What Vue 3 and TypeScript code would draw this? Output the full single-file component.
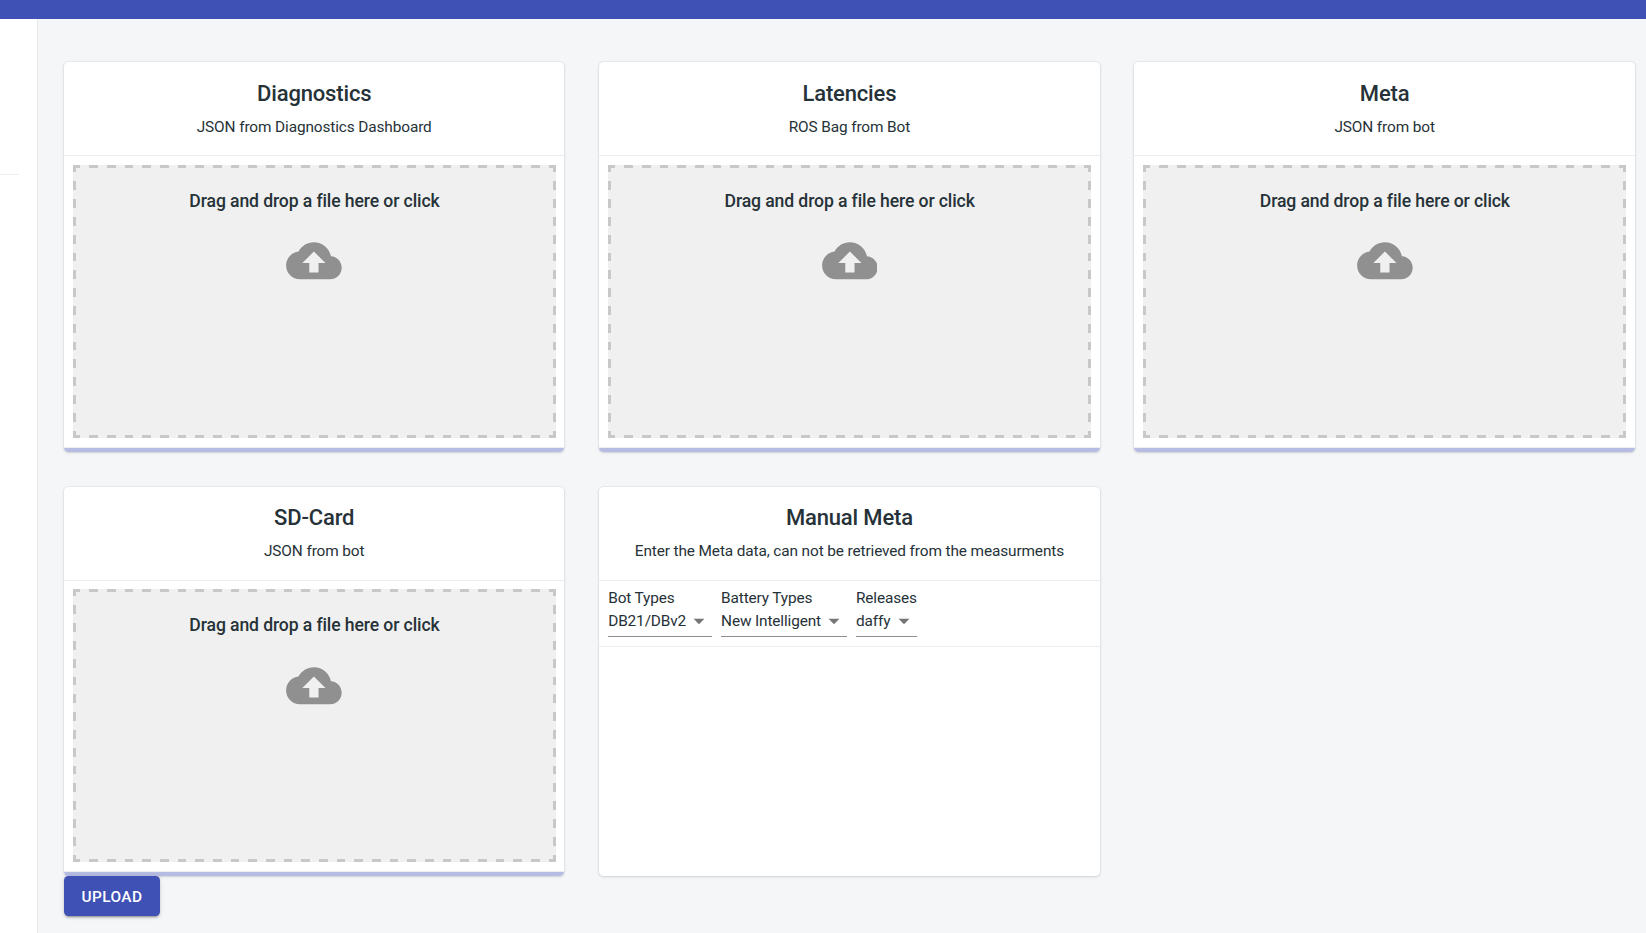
<script setup lang="ts">
interface UploadCard {
  title: string
  subtitle: string
}

interface MetaField {
  label: string
  value: string
}

const uploads: UploadCard[] = [
  { title: 'Diagnostics', subtitle: 'JSON from Diagnostics Dashboard' },
  { title: 'Latencies', subtitle: 'ROS Bag from Bot' },
  { title: 'Meta', subtitle: 'JSON from bot' },
  { title: 'SD-Card', subtitle: 'JSON from bot' },
]

const fields: MetaField[] = [
  { label: 'Bot Types', value: 'DB21/DBv2' },
  { label: 'Battery Types', value: 'New Intelligent' },
  { label: 'Releases', value: 'daffy' },
]
</script>

<template>
  <div class="app">
    <header class="topbar"></header>
    <div class="body">
      <aside class="sidebar"><hr class="side-rule" /></aside>
      <main class="content">
        <div class="cards">
          <section v-for="card in uploads" :key="card.title" class="card">
            <div class="card-head">
              <h4 class="title">{{ card.title }}</h4>
              <p class="subtitle">{{ card.subtitle }}</p>
            </div>
            <div class="card-body">
              <div class="dropzone">
                <p class="drop-text">Drag and drop a file here or click</p>
                <svg class="cloud" viewBox="0 0 24 24">
                  <path d="M19.35 10.04C18.67 6.59 15.64 4 12 4 9.11 4 6.6 5.64 5.35 8.04 2.34 8.36 0 10.91 0 14c0 3.31 2.69 6 6 6h13c2.76 0 5-2.24 5-5 0-2.64-2.05-4.78-4.65-4.96zM14 13v4h-4v-4H7l5-5 5 5h-3z" />
                </svg>
              </div>
            </div>
            <div class="progress"></div>
          </section>
          <section class="card">
            <div class="card-head">
              <h4 class="title">Manual Meta</h4>
              <p class="subtitle">Enter the Meta data, can not be retrieved from the measurments</p>
            </div>
            <div class="fields">
              <div v-for="field in fields" :key="field.label" class="field">
                <span class="label">{{ field.label }}</span>
                <div class="select">
                  <span>{{ field.value }}</span>
                  <svg class="caret" viewBox="0 0 24 24"><path d="M7 10l5 5 5-5z" /></svg>
                </div>
              </div>
            </div>
          </section>
        </div>
        <button class="upload" type="button">UPLOAD</button>
      </main>
    </div>
  </div>
</template>

<style>
body {
  margin: 0;
  overflow: hidden;
}
</style>

<style scoped>
.app {
  display: flex;
  flex-direction: column;
  height: 933px;
  background: #f4f6f8;
  color: #263238;
  font-family: Roboto, "Liberation Sans", sans-serif;
  font-size: 15.4px;
}
.topbar {
  flex: 0 0 19px;
  background: #3f51b5;
}
.body {
  flex: 1;
  display: flex;
  min-height: 0;
}
.sidebar {
  box-sizing: border-box;
  flex: 0 0 38px;
  background: #fff;
  border-right: 1px solid #e8eaec;
  padding-top: 155px;
}
.side-rule {
  width: 19px;
  height: 1px;
  margin: 0;
  border: 0;
  background: #eee;
}
.content {
  flex: 1;
  padding: 43px 11.2px 0 26px;
}
.cards {
  display: grid;
  grid-template-columns: repeat(3, 1fr);
  grid-auto-rows: 389.6px;
  gap: 35px 34.8px;
}
.card {
  display: flex;
  flex-direction: column;
  background: #fff;
  border-radius: 4.4px;
  overflow: hidden;
  box-shadow: 0 0 0 1px rgba(63, 63, 68, 0.05), 0 1px 3px 0 rgba(63, 63, 68, 0.15);
}
.card-head {
  box-sizing: border-box;
  flex: 0 0 94px;
  padding-top: 18.7px;
  border-bottom: 1px solid #eee;
  text-align: center;
}
.title {
  margin: 0;
  font-size: 22px;
  font-weight: 500;
  line-height: 26px;
  letter-spacing: -0.16px;
}
.subtitle {
  margin: 9px 0 0;
  font-size: 15.4px;
  line-height: 22px;
  letter-spacing: -0.12px;
}
.card-body {
  box-sizing: border-box;
  flex: 1;
  padding: 8.7px 8.5px 8px 9px;
  border-bottom: 1px solid #eee;
}
.dropzone {
  --dash: #c8c8c8;
  --across: repeating-linear-gradient(90deg, var(--dash) 0 0.9259%, transparent 0.9259% 2.7778%, var(--dash) 2.7778% 3.7037%);
  --down: repeating-linear-gradient(180deg, var(--dash) 0 1.6667%, transparent 1.6667% 5%, var(--dash) 5% 6.6667%);
  --corner: linear-gradient(var(--dash), var(--dash));
  display: flex;
  flex-direction: column;
  align-items: center;
  height: 273px;
  background:
    var(--corner) left top / 3px 3px no-repeat,
    var(--corner) right top / 3px 3px no-repeat,
    var(--corner) left bottom / 3px 3px no-repeat,
    var(--corner) right bottom / 3px 3px no-repeat,
    var(--across) center top / calc(100% - 6px) 3px no-repeat,
    var(--across) center bottom / calc(100% - 6px) 3px no-repeat,
    var(--down) left center / 3px calc(100% - 6px) no-repeat,
    var(--down) right center / 3px calc(100% - 6px) no-repeat,
    #f0f0f0;
}
.drop-text {
  margin: 26px 0 21.3px;
  font-size: 17.6px;
  font-weight: 500;
  line-height: 21px;
  letter-spacing: -0.11px;
}
.cloud {
  width: 55.8px;
  height: 55.6px;
  margin-right: 0.4px;
  fill: #909090;
}
.progress {
  flex: 0 0 4px;
  background: #b6bce2;
}
.fields {
  box-sizing: border-box;
  display: flex;
  gap: 9px;
  height: 66px;
  padding: 7px 9px 0;
  border-bottom: 1px solid #eee;
  letter-spacing: -0.14px;
}
.label {
  display: block;
  line-height: 20px;
}
.select {
  box-sizing: border-box;
  display: flex;
  align-items: center;
  justify-content: space-between;
  height: 29px;
  padding-bottom: 2px;
  border-bottom: 1px solid #8e8e8e;
}
.caret {
  width: 26px;
  height: 26px;
  fill: #757575;
}
.upload {
  display: block;
  width: 96px;
  height: 40px;
  padding: 1px 0 0;
  border: 0;
  border-radius: 4.4px;
  background: #3f51b5;
  color: #fff;
  font-family: inherit;
  font-size: 15.4px;
  font-weight: 500;
  letter-spacing: 0.4px;
  position: relative;
  box-shadow: 0 3px 1px -2px rgba(0, 0, 0, 0.2), 0 2px 2px 0 rgba(0, 0, 0, 0.14), 0 1px 5px 0 rgba(0, 0, 0, 0.12);
}
</style>
